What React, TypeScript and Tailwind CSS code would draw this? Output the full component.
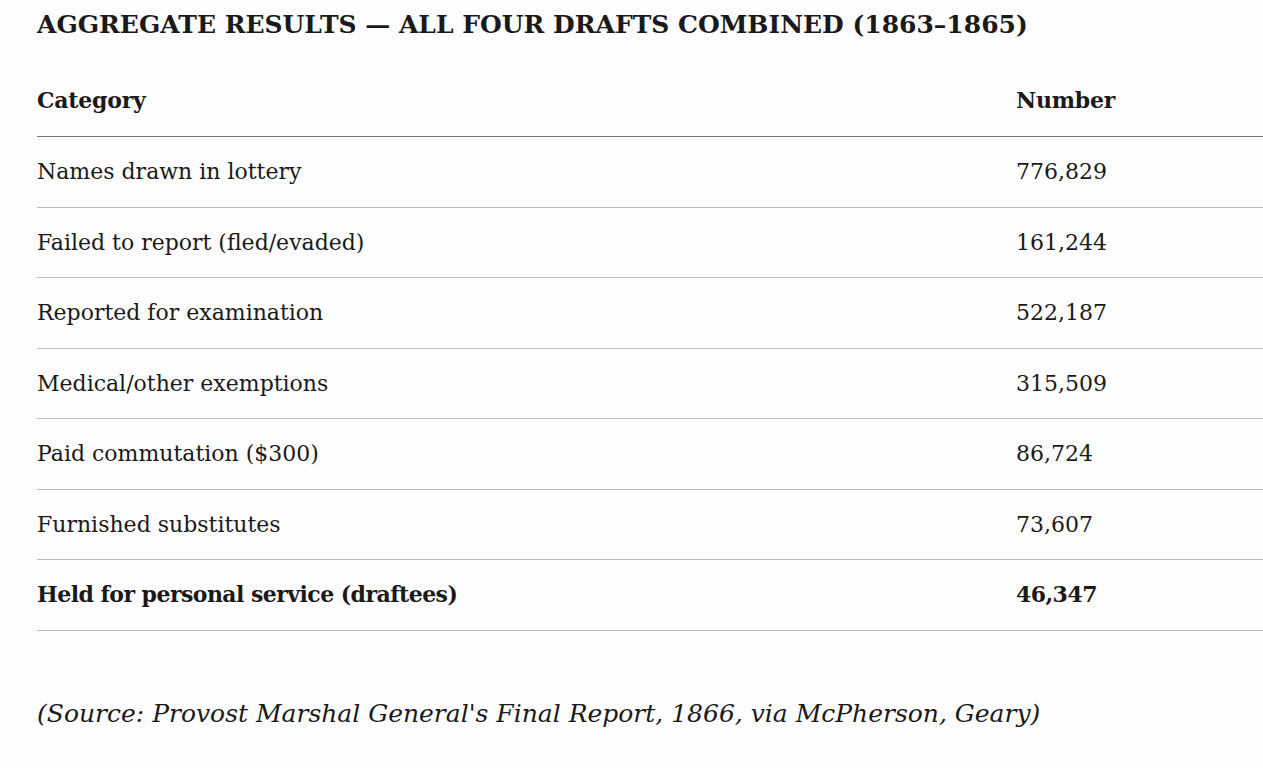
import React from "react";

const rows: { label: string; value: string; bold?: boolean }[] = [
  { label: "Names drawn in lottery", value: "776,829" },
  { label: "Failed to report (fled/evaded)", value: "161,244" },
  { label: "Reported for examination", value: "522,187" },
  { label: "Medical/other exemptions", value: "315,509" },
  { label: "Paid commutation ($300)", value: "86,724" },
  { label: "Furnished substitutes", value: "73,607" },
  { label: "Held for personal service (draftees)", value: "46,347", bold: true },
];

export default function App() {
  return (
    <div
      className="min-h-[768px] w-full overflow-hidden bg-[#fdfdfd] pl-[37px] pt-[9px] text-[#1a1a1a]"
      style={{ fontFamily: '"DejaVu Serif", "Liberation Serif", serif' }}
    >
      <h2 className="text-[25px] font-bold leading-[32px]">
        AGGREGATE RESULTS — ALL FOUR DRAFTS COMBINED (1863–1865)
      </h2>
      <div className="mt-[23px]">
        <div className="grid h-[73px] grid-cols-[979px_1fr] items-center border-b border-[#777777] text-[22px] font-bold tracking-[-0.01em]">
          <div>Category</div>
          <div>Number</div>
        </div>
        {rows.map((r) => (
          <div
            key={r.label}
            className={`grid h-[70.5px] grid-cols-[979px_1fr] items-center border-b border-[#bdbdbd] text-[22px] ${
              r.bold ? "font-bold tracking-[-0.025em]" : "font-normal tracking-normal"
            }`}
          >
            <div>{r.label}</div>
            <div>{r.value}</div>
          </div>
        ))}
      </div>
      <p className="mt-[66px] text-[25px] italic leading-[34px]">
        (Source: Provost Marshal General's Final Report, 1866, via McPherson, Geary)
      </p>
    </div>
  );
}
